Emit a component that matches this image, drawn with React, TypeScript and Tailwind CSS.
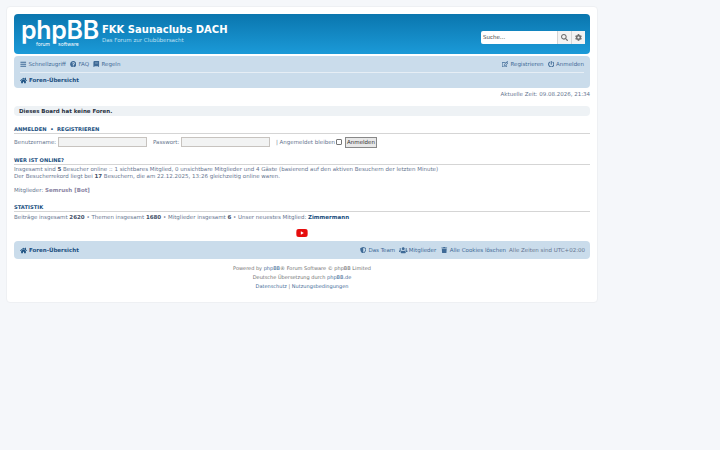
import React from "react";
import { FaBars, FaQuestionCircle, FaBook, FaHome, FaRegEdit, FaPowerOff, FaSearch, FaCog, FaShieldAlt, FaUsers, FaTrash, FaYoutube } from "react-icons/fa";

function Crumb() {
  return (
    <span className="flex items-center gap-[2px] font-bold text-[#1a4f80]">
      <FaHome className="text-[7px]" /> <span>Foren-Übersicht</span>
    </span>
  );
}

function App() {
  return (
    <div className="min-h-screen bg-[#f5f7fa] pt-[6px] pl-[6px] font-['DejaVu_Sans',sans-serif] text-[5.5px] leading-[9px] text-[#66758f]">
      <div className="w-[592px] h-[297px] bg-white border border-[#eef0f3] rounded-[4px] px-[7px] pt-[7px]">
        {/* Kopfzeile */}
        <div className="h-[40px] rounded-[4px] bg-gradient-to-b from-[#0a76ae] to-[#1b9ad8] flex justify-between text-white">
          <div className="flex">
            <div className="w-[81px] relative font-['Inter',sans-serif]">
              <span className="absolute left-[7px] top-[6px] text-[25px] leading-[20px] tracking-[-0.3px] font-semibold">phpBB</span>
              <span className="absolute left-[22px] top-[27px] text-[5px] leading-[6px]">forum</span>
              <span className="absolute left-[44px] top-[27px] text-[5px] leading-[6px]">software</span>
            </div>
            <div className="pt-[9px] pl-[7px]">
              <div className="text-[10px] leading-[14px] font-bold">FKK Saunaclubs DACH</div>
              <div className="text-[5.5px] leading-[6px] text-[#bfe0f3]">Das Forum zur Clubübersacht</div>
            </div>
          </div>
          <div className="pt-[17px] pr-[5px]">
            <div className="h-[13px] w-[104px] flex bg-white rounded-[2px] text-[#444]">
              <span className="flex-1 pl-[2px] leading-[13px]">Suche…</span>
              <span className="w-[14px] flex items-center justify-center bg-[#f3f3f3] border-l border-[#d5d5d5] text-[#707070]"><FaSearch className="text-[7px]" /></span>
              <span className="w-[14px] flex items-center justify-center bg-[#f3f3f3] border-l border-[#d5d5d5] text-[#707070]"><FaCog className="text-[7px]" /></span>
            </div>
          </div>
        </div>

        {/* Navigation */}
        <div className="mt-[2px] h-[32px] rounded-[4px] bg-[#cadceb] px-[6px]">
          <div className="h-[17px] flex items-center justify-between border-b border-[#e6eef5]">
            <div className="flex items-center gap-[4px] text-[#3f6a96]">
              <span className="flex items-center gap-[2px]"><FaBars className="text-[6.5px]" />Schnellzugriff</span>
              <span className="flex items-center gap-[2px]"><FaQuestionCircle className="text-[6.5px]" />FAQ</span>
              <span className="flex items-center gap-[2px]"><FaBook className="text-[6.5px]" />Regeln</span>
            </div>
            <div className="flex items-center gap-[4px] text-[#3f6a96]">
              <span className="flex items-center gap-[2px]"><FaRegEdit className="text-[6.5px]" />Registrieren</span>
              <span className="flex items-center gap-[2px]"><FaPowerOff className="text-[6.5px]" />Anmelden</span>
            </div>
          </div>
          <div className="h-[15px] flex items-center"><Crumb /></div>
        </div>

        <div className="mt-[2px] text-right leading-[9px]">Aktuelle Zeit: 09.08.2026, 21:34</div>

        <div className="mt-[7px] h-[10px] rounded-[4px] bg-[#eef2f5] px-[5px] font-bold leading-[10px] text-[#28313f]">Dieses Board hat keine Foren.</div>

        {/* Anmeldung */}
        <div className="mt-[9px] border-b border-[#d5d5d5] font-bold text-[#1a4f80] text-[5.2px] leading-[8px]">
          ANMELDEN &nbsp;•&nbsp; REGISTRIEREN
        </div>
        <div className="mt-[2px] h-[12px] flex items-center whitespace-nowrap">
          <span className="w-[42px]">Benutzername:</span>
          <span className="ml-[2px] w-[89px] h-[10px] bg-[#f2f3f3] border border-[#c7c3bf]" />
          <span className="ml-[6px] w-[26px]">Passwort:</span>
          <span className="ml-[2px] w-[89px] h-[10px] bg-[#f2f3f3] border border-[#c7c3bf]" />
          <span className="ml-[6px] w-[58px]">| Angemeldet bleiben</span>
          <span className="ml-[2px] w-[6px] h-[6px] border border-[#767676] rounded-[1px] bg-white" />
          <span className="ml-[3px] w-[32px] h-[11px] flex items-center justify-center bg-[#e8e8e8] border border-[#888888] text-[#333]">Anmelden</span>
        </div>

        {/* Wer ist online */}
        <div className="mt-[8px] border-b border-[#d5d5d5] font-bold text-[#1a4f80] text-[5.1px] leading-[8px]">WER IST ONLINE?</div>
        <div className="mt-[1px] leading-[7px] whitespace-nowrap">
          Insgesamt sind <b className="text-[#3f4f68]">5</b> Besucher online :: 1 sichtbares Mitglied, 0 unsichtbare Mitglieder und 4 Gäste (basierend auf den aktiven Besuchern der letzten Minute)
        </div>
        <div className="leading-[7px] whitespace-nowrap">
          Der Besucherrekord liegt bei <b className="text-[#3f4f68]">17</b> Besuchern, die am 22.12.2025, 13:26 gleichzeitig online waren.
        </div>
        <div className="mt-[7px] leading-[7px]">Mitglieder: <b className="text-[#8b85a3]">Semrush [Bot]</b></div>

        {/* Statistik */}
        <div className="mt-[9px] border-b border-[#d5d5d5] font-bold text-[#1a4f80] text-[5.2px] leading-[8px]">STATISTIK</div>
        <div className="mt-[1px] leading-[8px] whitespace-nowrap">
          Beiträge insgesamt <b className="text-[#3f4f68]">2620</b> • Themen insgesamt <b className="text-[#3f4f68]">1680</b> • Mitglieder insgesamt <b className="text-[#3f4f68]">6</b> • Unser neuestes Mitglied: <b className="text-[#1a4f80]">Zimmermann</b>
        </div>

        <div className="mt-[6px] h-[12px] flex justify-center items-center text-[#e60d0d]"><FaYoutube className="text-[12px]" /></div>

        {/* Fusszeile */}
        <div className="mt-[2px] h-[18px] rounded-[4px] bg-[#cadceb] pl-[6px] pr-[5px] flex items-center justify-between">
          <Crumb />
          <div className="flex items-center text-[#3f6a96]">
            <span className="flex items-center gap-[2px]"><FaShieldAlt className="text-[6.5px]" />Das Team</span>
            <span className="ml-[4px] flex items-center gap-[1px]"><FaUsers className="text-[8.5px]" />Mitglieder</span>
            <span className="ml-[5px] flex items-center gap-[2px]"><FaTrash className="text-[6.5px]" />Alle Cookies löschen</span>
            <span className="ml-[3px] text-[#66758f]">Alle Zeiten sind UTC+02:00</span>
          </div>
        </div>

        <div className="mt-[5px] text-center text-[5px] text-[#707070] leading-[9px]">
          <div>Powered by <span className="text-[#3f6a96]">phpBB</span>® Forum Software © phpBB Limited</div>
          <div>Deutsche Übersetzung durch <span className="text-[#3f6a96]">phpBB.de</span></div>
          <div className="text-[#3f6a96]">Datenschutz <span className="text-[#707070]">|</span> Nutzungsbedingungen</div>
        </div>
      </div>
    </div>
  );
}

export default App;
